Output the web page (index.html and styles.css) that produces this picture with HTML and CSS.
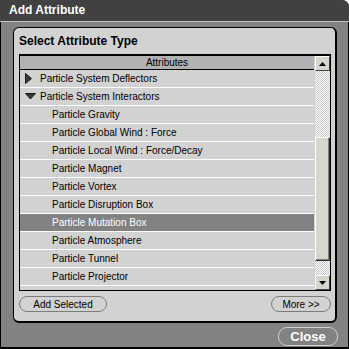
FILE: index.html
```html
<!DOCTYPE html>
<html lang="en">
<head>
  <meta charset="UTF-8">
  <title>Add Attribute</title>
  <link rel="stylesheet" href="styles.css">
</head>
<body>
  <div class="window">
    <header class="titlebar">Add Attribute</header>

    <div class="panel">
      <h2 class="panel-title">Select Attribute Type</h2>

      <div class="listbox">
        <div class="list-main">
          <div class="list-header">Attributes</div>
          <ul class="list">
            <li class="item group">
              <svg class="twisty" width="7" height="11" viewBox="0 0 7 11"><path d="M0.5 0.5 L6.5 5.5 L0.5 10.5 Z" fill="#3a3a3a" stroke="#1a1a1a" stroke-width="1"/></svg>
              Particle System Deflectors
            </li>
            <li class="item group">
              <svg class="twisty" width="11" height="7" viewBox="0 0 11 7"><path d="M0.5 0.5 L10.5 0.5 L5.5 6 Z" fill="#3a3a3a" stroke="#1a1a1a" stroke-width="1"/></svg>
              Particle System Interactors
            </li>
            <li class="item child">Particle Gravity</li>
            <li class="item child">Particle Global Wind : Force</li>
            <li class="item child">Particle Local Wind : Force/Decay</li>
            <li class="item child">Particle Magnet</li>
            <li class="item child">Particle Vortex</li>
            <li class="item child">Particle Disruption Box</li>
            <li class="item child selected">Particle Mutation Box</li>
            <li class="item child">Particle Atmosphere</li>
            <li class="item child">Particle Tunnel</li>
            <li class="item child">Particle Projector</li>
            <li class="item child"></li>
          </ul>
        </div>

        <div class="scrollbar">
          <div class="scroll-button">
            <svg width="7" height="4" viewBox="0 0 7 4"><path d="M3.5 0 L7 4 L0 4 Z" fill="#000"/></svg>
          </div>
          <div class="scroll-track top"></div>
          <div class="scroll-thumb"></div>
          <div class="scroll-track bottom"></div>
          <div class="scroll-button">
            <svg width="7" height="4" viewBox="0 0 7 4"><path d="M0 0 L7 0 L3.5 4 Z" fill="#000"/></svg>
          </div>
        </div>
      </div>

      <div class="button-row">
        <button class="pill add-button">Add Selected</button>
        <button class="pill more-button">More &gt;&gt;</button>
      </div>
    </div>

    <div class="footer">
      <button class="close-button">Close</button>
    </div>
  </div>
</body>
</html>
```

FILE: styles.css
```css
:root {
  --title-color: #414141;
  --frame-color: #828282;
  --panel-color: #d2d2d2;
  --header-color: #b2b2b2;
  --selected-color: #828282;
  --thumb-color: #d6d6cc;
}

* {
  box-sizing: border-box;
}

body {
  margin: 0;
  background-color: #ffffff;
  font-family: "Liberation Sans", Arial, sans-serif;
  font-size: 10px;
  color: #000000;
}

.window {
  width: 349px;
  height: 349px;
  background-color: var(--frame-color);
  border: 1px solid #000000;
  border-top: none;
  border-bottom-width: 2px;
  border-top-right-radius: 7px;
  display: flex;
  flex-direction: column;
}

.titlebar {
  height: 22px;
  margin: 0 -1px;
  padding-left: 9px;
  background-color: var(--title-color);
  border-bottom: 1px solid #c4c4c4;
  border-top-right-radius: 7px;
  color: #ffffff;
  font-size: 12px;
  font-weight: bold;
  line-height: 21px;
}

/* panel */
.panel {
  width: 324px;
  margin: 5px 0 0 12px;
  padding: 0 5px 9px 5px;
  background-color: var(--panel-color);
  border: 1px solid #000000;
  border-right-width: 2px;
  border-bottom-width: 2px;
  border-radius: 6px;
}

.panel-title {
  margin: 0;
  padding: 6px 0 6px 0;
  font-size: 12px;
  font-weight: bold;
  line-height: 14px;
}

.listbox {
  display: flex;
  width: 312px;
  height: 237px;
  border: 1px solid #000000;
  border-top-width: 2px;
}

.list-main {
  flex: 1;
  overflow: hidden;
}

.list-header {
  height: 14px;
  background-color: var(--header-color);
  border-bottom: 1px solid #000000;
  text-align: center;
  line-height: 13px;
}

.list {
  list-style: none;
  margin: 0;
  padding: 0;
}

.item {
  display: flex;
  align-items: center;
  height: 18px;
  border-bottom: 1px solid #ffffff;
  white-space: nowrap;
}

.item.group {
  padding-left: 5px;
}

.item.child {
  padding-left: 32px;
}

.item.selected {
  background-color: var(--selected-color);
  color: #ffffff;
}

.twisty {
  margin-right: 8px;
}

.item.group:nth-child(2) .twisty {
  margin-right: 4px;
}

/* scrollbar */
.scrollbar {
  display: flex;
  flex-direction: column;
  width: 16px;
  border-left: 1px solid #d2d2d2;
}

.scroll-button {
  height: 15px;
  display: flex;
  align-items: center;
  justify-content: center;
  background-color: var(--thumb-color);
  border: 1px solid;
  border-color: #ffffff #404040 #404040 #ffffff;
}

.scroll-track {
  background: repeating-conic-gradient(#ffffff 0 25%, #c8c8c8 0 50%) 0 0 / 2px 2px;
}

.scroll-track.top {
  height: 66px;
}

.scroll-track.bottom {
  height: 14px;
}

.scroll-thumb {
  flex: 1;
  background-color: var(--thumb-color);
  border: 1px solid;
  border-color: #ffffff #303030 #303030 #ffffff;
  box-shadow: inset -1px -1px 0 #808080;
}

/* buttons */
.button-row {
  display: flex;
  justify-content: space-between;
  width: 312px;
  margin-top: 5px;
}

.pill {
  height: 16px;
  padding: 0;
  background-color: transparent;
  border: 1px solid #7c7c7c;
  border-radius: 8px;
  font-family: inherit;
  font-size: 10px;
  color: #000000;
}

.add-button {
  width: 88px;
}

.more-button {
  width: 60px;
}

.footer {
  display: flex;
  justify-content: flex-end;
  padding: 4px 10px 0 0;
}

.close-button {
  width: 60px;
  height: 19px;
  padding: 0;
  background-color: transparent;
  border: 1px solid #cfcfcf;
  border-radius: 9px;
  font-family: inherit;
  font-size: 13px;
  font-weight: bold;
  color: #ffffff;
}
```
